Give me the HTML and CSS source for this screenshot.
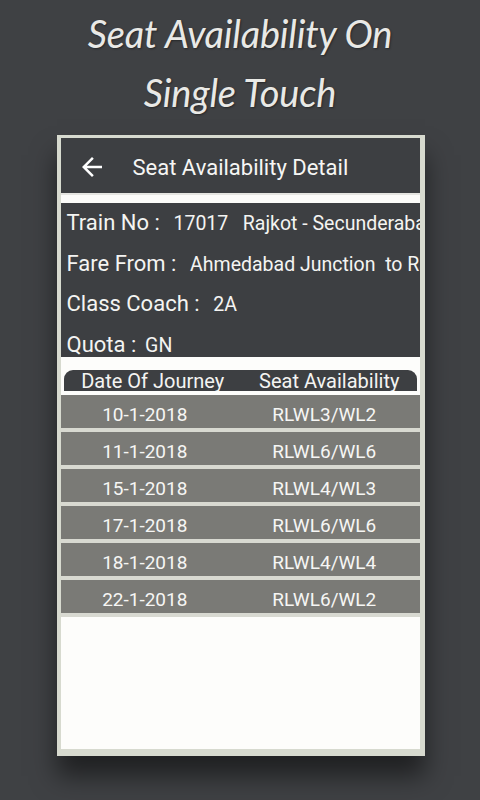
FILE: index.html
```html
<!DOCTYPE html>
<html>
<head>
<meta charset="utf-8">
<link rel="stylesheet" href="styles.css">
</head>
<body>
<div class="page">
  <h1 class="headline">Seat Availability On<br>Single Touch</h1>
  <div class="phone">
    <div class="toolbar">
      <svg class="back" viewBox="0 0 24 24" width="30" height="30"><path d="M20 11H7.83l5.59-5.59L12 4l-8 8 8 8 1.41-1.41L7.83 13H20v-2z" fill="#ffffff"/></svg>
      <span class="toolbar-title">Seat Availability Detail</span>
    </div>
    <div class="band"></div>
    <div class="info">
      <div class="info-line"><span class="label">Train No :</span><span class="value">  17017   Rajkot - Secunderabad Express</span></div>
      <div class="info-line"><span class="label">Fare From :</span><span class="value">  Ahmedabad Junction  to Rajkot</span></div>
      <div class="info-line"><span class="label">Class Coach :</span><span class="value">  2A</span></div>
      <div class="info-line"><span class="label">Quota :</span><span class="value"> GN</span></div>
    </div>
    <div class="table">
      <div class="thead"><span class="th">Date Of Journey</span><span class="th">Seat Availability</span></div>
      <div class="rows">
        <div class="row"><span class="cell">10-1-2018</span><span class="cell">RLWL3/WL2</span></div>
        <div class="row"><span class="cell">11-1-2018</span><span class="cell">RLWL6/WL6</span></div>
        <div class="row"><span class="cell">15-1-2018</span><span class="cell">RLWL4/WL3</span></div>
        <div class="row"><span class="cell">17-1-2018</span><span class="cell">RLWL6/WL6</span></div>
        <div class="row"><span class="cell">18-1-2018</span><span class="cell">RLWL4/WL4</span></div>
        <div class="row"><span class="cell">22-1-2018</span><span class="cell">RLWL6/WL2</span></div>
      </div>
    </div>
  </div>
</div>
</body>
</html>
```
FILE: styles.css
```css
html, body {
  margin: 0;
  padding: 0;
  background: #3f4144;
}
.page {
  width: 480px;
  height: 800px;
  overflow: hidden;
  display: flex;
  flex-direction: column;
  align-items: center;
  background: #3f4144;
}
.headline {
  margin: 4px 0 0 0;
  font-family: "Lato", "DejaVu Sans", sans-serif;
  font-weight: normal;
  font-style: italic;
  font-size: 38px;
  line-height: 59px;
  letter-spacing: -0.2px;
  color: #e9e9e6;
  text-align: center;
  text-shadow: 1px 1px 2px rgba(0,0,0,0.4);
}
.phone {
  margin: 13px 0 0 1px;
  width: 359px;
  height: 611px;
  border-style: solid;
  border-color: #d7dacf;
  border-width: 3px 5px 7px 4px;
  background: #fdfdfb;
  overflow: hidden;
  box-shadow: 0 20px 24px rgba(0,0,0,0.5);
  font-family: "Roboto", "Liberation Sans", sans-serif;
  color: #f4f4f2;
  display: flex;
  flex-direction: column;
}
.toolbar {
  height: 55px;
  background: #3d3f42;
  display: flex;
  align-items: center;
  padding-left: 16px;
  flex-shrink: 0;
}
.back {
  display: block;
  margin-top: 3px;
}
.toolbar-title {
  margin-left: 26px;
  font-size: 22px;
  color: #f6f6f4;
  margin-top: 3px;
}
.band {
  height: 8px;
  background: #fbfbf9;
  border-top: 2px solid #e4e4e0;
  flex-shrink: 0;
}
.info {
  height: 154px;
  background: #3d3f42;
  overflow: hidden;
  flex-shrink: 0;
  padding-left: 6px;
}
.info-line {
  height: 40.6px;
  line-height: 40px;
  white-space: pre;
}
.label {
  font-size: 22px;
}
.value {
  font-size: 19.5px;
  margin-left: 4px;
}
.table {
  padding-top: 13px;
  background: #fdfdfb;
}
.thead {
  height: 21px;
  margin: 0 3px;
  background: #3d3f42;
  border-radius: 9px 9px 0 0;
  display: grid;
  grid-template-columns: 1fr 1fr;
  overflow: hidden;
}
.th {
  font-size: 20px;
  line-height: 19px;
  padding-top: 2px;
  text-align: center;
  padding-left: 2px;
}
.rows {
  margin-top: 4px;
  display: flex;
  flex-direction: column;
}
.row {
  height: 33px;
  background: #7a7a76;
  border-bottom: 4px solid #d8d9d1;
  display: grid;
  grid-template-columns: 1fr 1fr;
  align-items: center;
}
.cell {
  font-size: 19px;
  text-align: center;
  padding-right: 11px;
  padding-top: 5px;
  color: #f6f6f4;
}
```
